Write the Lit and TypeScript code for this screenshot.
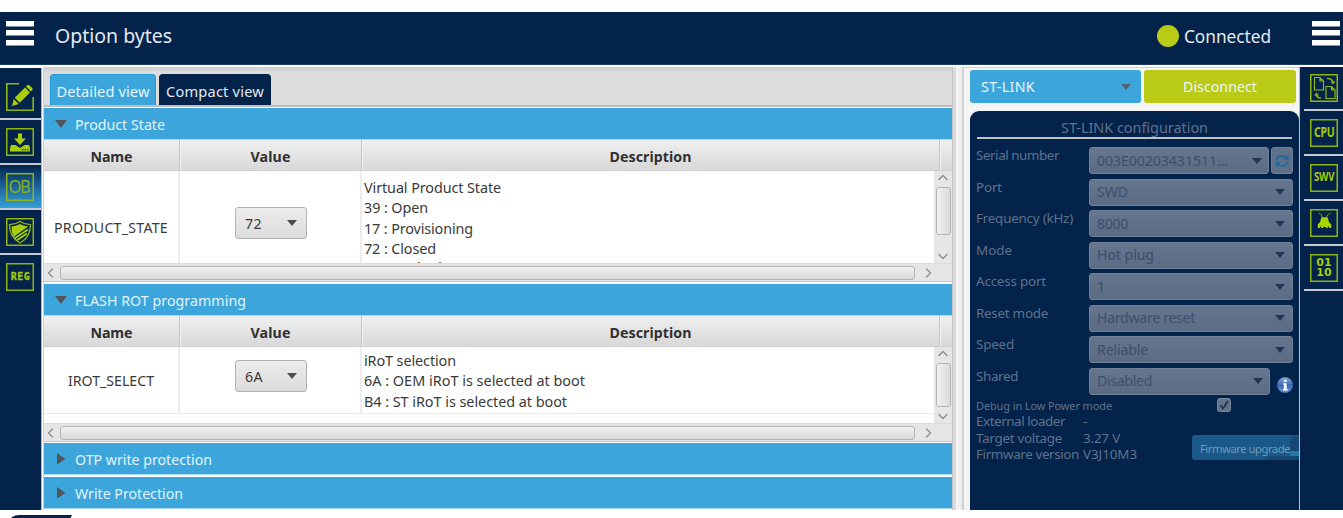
import { LitElement, html, css, svg, nothing } from "lit";
import { customElement, property } from "lit/decorators.js";

const FAMILY = '"Noto Sans", "Open Sans", sans-serif';
const pen = document.createElement("canvas").getContext("2d")!;

/** A single line of text tracked so that it spans a given width. */
@customElement("ui-text")
class UiText extends LitElement {
  @property() text = "";
  @property({ type: Number }) w = 0;
  @property({ type: Number }) size = 14.6;
  @property({ type: Number }) weight = 400;
  static styles = css`
    :host { display: inline-block; white-space: pre; flex: none; }
  `;
  render() {
    pen.font = `${this.weight} ${this.size}px ${FAMILY}`;
    const n = this.text.length;
    const gap = this.w && n > 1 ? (this.w - pen.measureText(this.text).width) / n : 0;
    return html`<span style="font-size:${this.size}px;font-weight:${this.weight};letter-spacing:${gap.toFixed(3)}px">${this.text}</span>`;
  }
}

const t = (text: string, w: number, size = 14.6, weight = 400) =>
  html`<ui-text .text=${text} .w=${w} .size=${size} .weight=${weight}></ui-text>`;

const glyphs: Record<string, unknown> = {
  edit: svg`<path d="M13 .8H.8V27.200H27.200V14" fill="none" stroke="#8fb512" stroke-width="1.600"/>
    <path d="M6 23l1.800-7 5 5zM8.800 14.800L19 4.600l5 5-10.200 10.200zM20 3.600l1.300-1.300q1.200-1 2.300.1l2.600 2.600q1 1.100 0 2.200L24.900 8.500z" fill="#a9cf0a"/>`,
  download: svg`<path d="M12 5.500h4v5h4l-6 6.500-6-6.500h4z" fill="#a9cf0a"/>
    <path d="M5 17h4.500l4.500 3 4.500-3H23l1 3v3.500H4V20z" fill="#a9cf0a"/><path d="M16 21.700h1.300M18.600 21.700h1.300M21.200 21.700h1.300" stroke="#03234b" stroke-width="1.200"/>`,
  shield: svg`<path d="M14 3.500q5 3.200 10.500 3.200 0 12.300-10.500 18.300Q3.500 19 3.500 6.700 9 6.700 14 3.500z" fill="none" stroke="#8fb512" stroke-width="1.300"/>
    <path d="M14 6q4 2.400 8.200 2.600L7.500 19Q5.600 15 5.500 8.600 10 8.400 14 6z" fill="#a9cf0a"/>
    <path d="M8.500 20.500L22 11.500M11 22.300L21 15.500" stroke="#a9cf0a" stroke-width="1.700"/>`,
  files: svg`<path d="M4.500 3.500H10L13.500 7V16H4.500zM10 3.500V7H13.500M16 12.500h5.500L25 16V24.500H16zM21.500 12.500V16H25" fill="none" stroke="#8fb512" stroke-width="1.200"/>
    <path d="M17 4.500q5-.5 6 4M6 20q1 4.500 5 4" fill="none" stroke="#8fb512" stroke-width="1.500"/>
    <path d="M20.500 7.500h5L23 10.500zM4 21.500l2.500-3 2.500 3z" fill="#8fb512"/>`,
  bug: svg`<path d="M8.500 4Q12 5 12.700 9M20.500 4Q17 5 16.300 9" fill="none" stroke="#6f9c18" stroke-width="1"/>
    <path d="M11.500 8.300h6l1.700 5.200 2 1.700V19h-2.200v-1.600h-1.200V19h-1.800v-1h-3v1h-1.800v-1.600H10V19H7.800v-3.800l2-1.700z" fill="#a9d400"/>`,
};
const words: Record<string, unknown> = {
  OB: html`<span class="ob">OB</span>`,
  REG: html`<span class="reg">REG</span>`,
  CPU: html`<span class="cpu">CPU</span>`,
  SWV: html`<span class="swv">SWV</span>`,
  bits: html`<span class="bits">01<br />10</span>`,
};

/** Square tool icon with a lime outline. */
@customElement("tool-icon")
class ToolIcon extends LitElement {
  @property() name = "";
  static styles = css`
    :host { display: block; width: 28px; height: 28px; color: #a4cc08; }
    .box { display: flex; align-items: center; justify-content: center; width: 28px; height: 28px; box-sizing: border-box; border: 1px solid #8fb512; box-shadow: inset 0 0 0 .5px #8fb512; }
    .bare { border-color: transparent; box-shadow: none; }
    svg { width: 28px; height: 28px; margin: -1px; display: block; flex: none; }
    span { line-height: 1; white-space: nowrap; text-align: center; }
    .ob { font: 17.500px/1 "Noto Sans", sans-serif; letter-spacing: -1.500px; color: #86b01e; margin-left: -1px; transform: scaleX(.95); }
    .reg { font: bold 10px/1 "DejaVu Sans Mono", monospace; letter-spacing: .5px; -webkit-text-stroke: .3px #a4cc08; margin-left: 1px; }
    .cpu { font: bold 13.500px/1 "Noto Sans", sans-serif; letter-spacing: -.3px; transform: scaleX(.78); }
    .swv { font: bold 11.500px/1 "Noto Sans", sans-serif; letter-spacing: -.2px; transform: scaleX(.84); margin-top: -3px; }
    .bits { font: bold 11px/10.500px "DejaVu Sans", sans-serif; }
  `;
  render() {
    const g = glyphs[this.name];
    return html`<div class="box ${this.name === "edit" ? "bare" : ""}">
      ${g ? html`<svg viewBox="0 0 28 28">${g}</svg>` : words[this.name]}
    </div>`;
  }
}

@customElement("scroll-bar")
class ScrollBar extends LitElement {
  @property({ type: Boolean }) vertical = false;
  @property({ type: Boolean }) short = false;
  static styles = css`
    :host { display: block; }
    .h, .v { display: flex; background: #e6e6e6; box-sizing: border-box; height: 100%; align-items: center; }
    .h { padding: 0 0 0 3px; border-top: 1px solid #dcdcdc; border-bottom: 1px solid #c8c8c8; }
    .v { flex-direction: column; padding: 3px 0; }
    .thumb { border: 1px solid #b4b4b4; border-radius: 3px; box-sizing: border-box; }
    .h .thumb { width: 855px; height: 14px; margin: 0 10px 0 6px; background: linear-gradient(#f2f2f2, #dadada); }
    .v .thumb { width: 15px; flex: 1; margin: 6px 0 18px; background: linear-gradient(90deg, #f2f2f2, #dadada); }
    .v.short .thumb { margin-bottom: 6px; }
    svg { width: 10px; height: 10px; flex: none; fill: none; stroke: #8c8c8c; stroke-width: 1.300; }
    .h svg { width: 7px; }
    .v svg { height: 7px; }
  `;
  render() {
    return this.vertical
      ? html`<div class="v ${this.short ? "short" : ""}"><svg viewBox="0 0 10 7"><path d="M.5 6L5 1.500 9.500 6" /></svg><div class="thumb"></div><svg viewBox="0 0 10 7"><path d="M.5 1L5 5.500 9.500 1" /></svg></div>`
      : html`<div class="h"><svg viewBox="0 0 7 10"><path d="M6 .5L1.500 5 6 9.500" /></svg><div class="thumb"></div><svg viewBox="0 0 7 10"><path d="M1 .5L5.500 5 1 9.500" /></svg></div>`;
  }
}

@customElement("option-table")
class OptionTable extends LitElement {
  @property() name = "";
  @property({ type: Number }) nameWidth = 0;
  @property() value = "";
  @property({ type: Number }) valueWidth = 0;
  @property({ attribute: false }) lines: [string, number][] = [];
  @property({ type: Boolean }) compact = false;
  static styles = css`
    :host { display: block; }
    .head, .row { display: grid; grid-template-columns: 136px 182px 1fr; }
    .head { grid-template-columns: 136px 182px 578px 1fr; height: 31px; background: linear-gradient(#f0f0f0, #d8d8d8); box-sizing: border-box; border-bottom: 1px solid #d0d0d0; color: #303030; }
    .head div { border-right: 1px solid #c6c6c6; display: grid; place-items: center; box-shadow: 1px 0 #f2f2f2; padding-top: 2px; }
    .head div:last-child { border: 0; box-shadow: none; }
    .body { display: grid; grid-template-columns: 1fr 18px; grid-template-rows: 92px; height: 92px; background: #fff; overflow: hidden; color: #3a3a3a; }
    .row { height: 112px; }
    .cell { border-right: 2px solid #ededed; display: flex; align-items: center; justify-content: center; }
    .desc { display: block; border: 0; padding: 6px 0 0 2px; line-height: 20.300px; }
    .desc div { height: 20.300px; }
    .desc div:nth-child(5) { margin-top: -1.500px; }
    .combo { width: 72px; height: 32px; box-sizing: border-box; border: 1px solid #b2b2b2; border-radius: 3px; background: linear-gradient(#ececec, #dcdcdc); display: flex; align-items: center; justify-content: space-between; padding: 0 9px 0 9px; margin: 0 0 9px 2px; }
    .arrow { width: 0; border: 5px solid transparent; border-top: 6px solid #4d4d4d; border-bottom: 0; }
    .compact .row { height: 66px; border-bottom: 1px solid #ececec; }
    .compact .body { height: 76px; grid-template-rows: 76px; }
    .compact .desc { padding-top: 3px; }
    scroll-bar { height: 19px; }
    .body scroll-bar { height: auto; }
  `;
  render() {
    return html`<div class=${this.compact ? "compact" : "full"}>
      <div class="head">
        <div>${t("Name", 42, 14.2, 700)}</div><div>${t("Value", 40, 14.2, 700)}</div><div>${t("Description", 82, 14.2, 700)}</div><div></div>
      </div>
      <div class="body">
        <div class="row">
          <div class="cell">${t(this.name, this.nameWidth, 14.2)}</div>
          <div class="cell"><div class="combo">${t(this.value, this.valueWidth, 14.2)}<i class="arrow"></i></div></div>
          <div class="cell desc">${this.lines.map(([s, w]) => html`<div>${t(s, w, 14.4)}</div>`)}</div>
        </div>
        <scroll-bar vertical ?short=${this.compact}></scroll-bar>
      </div>
      <scroll-bar></scroll-bar>
    </div>`;
  }
}

@customElement("link-panel")
class LinkPanel extends LitElement {
  static styles = css`
    :host { display: block; }
    .buttons { display: grid; grid-template-columns: 171px 152px; gap: 3px; height: 33px; color: #eaf6fd; }
    .buttons ui-text { margin-top: -2px; }
    .probe { background: #3ca6dc; border-radius: 3px; display: flex; align-items: center; justify-content: space-between; padding: 0 10px 0 11px; }
    .off { background: #b9cb17; border-radius: 3px; display: grid; place-items: center; }
    .arrow { width: 0; border: 5px solid transparent; border-top: 6px solid #23364f; border-bottom: 0; }
    .probe .arrow { border-top-color: #4f6470; }
    .panel { background: #03234b; border-radius: 9px 9px 0 0; margin-top: 8px; height: 399px; box-sizing: border-box; color: #5f728b; padding: 4px 6px 0; width: 329px; }
    .title { height: 22px; display: flex; align-items: center; justify-content: center; padding-top: 1px; box-sizing: border-box; }
    .rule { height: 2px; background: #bcc3cd; margin: 0 1px 8px 1px; }
    .row { display: grid; grid-template-columns: 113px 204px; height: 31.500px; }
    .name { line-height: 17px; margin-top: -1px; }
    .fields { display: flex; gap: 2px; align-items: flex-start; }
    .combo { flex: 1; height: 27px; box-sizing: border-box; border: 1px solid #708096; border-radius: 3px; background: linear-gradient(#65768e, #5a6b83); color: #3d4f69; display: flex; align-items: center; justify-content: space-between; padding: 0 7px 0 7px; }
    .combo ui-text { margin-top: -2px; }
    .combo:not(:last-child) { padding-right: 6px; }
    .refresh { width: 22px; height: 27px; border: 1px solid #708096; border-radius: 3px; box-sizing: border-box; background: #5f7189; display: grid; place-items: center; }
    .refresh svg { width: 16px; height: 16px; }
    .info { width: 16px; height: 16px; margin: 9px 0 0 5px; }
    .debug { display: flex; justify-content: space-between; height: 15px; align-items: center; padding-right: 62px; margin-top: -2px; }
    .debug ui-text { margin-top: -1px; }
    .check { width: 14px; height: 14px; }
    .foot { display: grid; grid-template-columns: 1fr 107px; align-items: end; margin-right: -6px; }
    .facts { display: grid; grid-template-columns: 107px 1fr; grid-auto-rows: 16.700px; line-height: 16.700px; }
    .upgrade { height: 25px; border-radius: 3px 0 0 3px; background: #195887; color: #6f9abc; display: flex; align-items: center; padding-left: 8px; position: relative; overflow: hidden; margin-bottom: 2px; }
    .shade { position: absolute; right: 0; top: 0; width: 34px; height: 25px; }
    .upgrade ui-text { position: relative; margin-top: -2px; }
  `;
  render() {
    const rows: [string, number, string, number][] = [
      ["Serial number", 83, "003E00203431511...", 131],
      ["Port", 26, "SWD", 31],
      ["Frequency (kHz)", 97, "8000", 31],
      ["Mode", 36, "Hot plug", 57],
      ["Access port", 70, "1", 7],
      ["Reset mode", 72, "Hardware reset", 98],
      ["Speed", 38, "Reliable", 51],
      ["Shared", 42, "Disabled", 55],
    ];
    return html`
      <div class="buttons">
        <div class="probe">${t("ST-LINK", 54, 14.2)}<i class="arrow"></i></div>
        <div class="off">${t("Disconnect", 74, 14.2)}</div>
      </div>
      <div class="panel">
        <div class="title">${t("ST-LINK configuration", 147, 14.4)}</div>
        <div class="rule"></div>
        ${rows.map(([n, w, v, vw], i) => html`<div class="row">
          <div class="name">${t(n, w, 13.4)}</div>
          <div class="fields">
            <div class="combo">${t(v, vw, 14.2)}<i class="arrow"></i></div>${i === 0 ? html`<div class="refresh"><svg viewBox="0 0 16 16">
              <path d="M2.500 7.500Q3 3 8 3q3 0 4.500 2.200M13.500 8.500Q13 13 8 13q-3 0-4.500-2.200" fill="none" stroke="#25699c" stroke-width="2.200" /><path d="M14.500 1.500V7H9.200zM1.500 14.500V9h5.300z" fill="#25699c" /></svg></div>` : nothing}
            ${i === 7 ? html`<svg class="info" viewBox="0 0 16 16"><defs><linearGradient id="g" x2="0" y2="1"><stop stop-color="#90acd8" /><stop offset=".5" stop-color="#3a68b2" /><stop offset="1" stop-color="#6d9bdd" /></linearGradient></defs>
              <circle cx="8" cy="8" r="7.700" fill="url(#g)" stroke="#456ba8" stroke-width=".6" /><path d="M6.800 2.800h2.800v2.200H6.800zM6 6.200h3.600V12h1v1.500H6V12h1V7.700H6z" fill="#fff" /></svg>` : nothing}
          </div>
        </div>`)}
        <div class="debug">${t("Debug in Low Power mode", 136, 11)}
          <svg class="check" viewBox="0 0 14 14"><rect x=".5" y=".5" width="13" height="13" rx="2" fill="#61728b" stroke="#75859b" /><path d="M3.500 7l2.500 3.500 5-7.500" fill="none" stroke="#1d3352" stroke-width="1.700" /></svg>
        </div>
        <div class="foot">
          <div class="facts">
            ${t("External loader", 89, 13.4)}${t("-", 5, 13.4)}
            ${t("Target voltage", 86, 13.4)}${t("3.27 V", 37, 13.4)}
            ${t("Firmware version", 103, 13.4)}${t("V3J10M3", 54, 13.4)}
          </div>
          <div class="upgrade"><svg class="shade" viewBox="0 0 34 25"><path d="M25 16V8q1-7 9-7v15zM0 25q2-4 7-4h27v4z" fill="#164873" /><path d="M25 16h9v5h-9z" fill="#2477a8" /></svg>${t("Firmware upgrade", 90, 11.3)}</div>
        </div>
      </div>`;
  }
}

@customElement("app-root")
class AppRoot extends LitElement {
  static styles = css`
    :host { display: block; width: 1343px; height: 518px; overflow: hidden; background: #fff; font-family: "Noto Sans", "Open Sans", sans-serif; padding-top: 12px; box-sizing: border-box; }
    .top { height: 53px; box-sizing: border-box; background: #03234b; border-bottom: 1px solid #1b3b63; display: flex; align-items: flex-start; padding: 9px 3px 0 6px; color: #e4e9ef; }
    .burger { width: 28px; height: 25px; flex: none; fill: #fff; }
    .title { margin: 1px 0 0 21px; line-height: 27px; flex: 1; }
    .state { display: flex; align-items: center; gap: 5px; margin-right: 41px; line-height: 27px; }
    .state ui-text { margin-top: 2px; height: 27px; }
    .dot { width: 22px; height: 22px; border-radius: 50%; background: #b9cb17; }
    .main { display: flex; height: 443px; margin-top: 2px; }
    .left { width: 42px; box-sizing: border-box; background: #03234b; border-right: 1px solid #a9b3c0; margin-top: 1px; }
    .tool { height: 45px; box-sizing: border-box; padding: 8px 0 0 6px; border-bottom: 2px solid #c4cad2; }
    .left .tool:first-child { height: 52px; padding-top: 15px; }
    .left .tool:last-child { border: 0; }
    .active { background: linear-gradient(#03234b, #1d6499 50%, #36a0d8); }
    .work { width: 910px; margin-left: 1px; box-sizing: border-box; border-left: 1px solid #cfcfcf; border-right: 1px solid #c6c6c6; background: #fff; }
    .tabs { height: 40px; background: linear-gradient(#cfcfcf, #dcdcdc 5px); box-sizing: border-box; padding: 7px 0 0 6px; display: flex; gap: 3px; border-bottom: 2px solid #bdbdbd; }
    .tab { height: 31px; width: 106px; box-sizing: border-box; border-radius: 4px 4px 0 0; background: #3ca6dc; border: 1px solid #229bd6; border-bottom: 0; color: #e6f5fd; display: grid; place-items: center; padding-top: 1px; }
    .tab.dark { width: 112px; background: #03234b; border-color: #03234b; color: #e4e9ef; }
    .bar { height: 32px; background: #3ca6dc; box-sizing: border-box; border-bottom: 1px solid #a9d9f0; display: flex; align-items: center; color: #e0f3fc; margin-top: 1px; }
    .bar.second { margin-top: 2px; }
    .bar.third { margin-top: 1px; }
    .bar.last { margin-top: 2px; }
    .bar svg { width: 12px; height: 12px; margin: 0 8px 0 11px; fill: #505659; }
    .split { width: 9px; background: linear-gradient(90deg, #dadada 3px, #f7f7f7 3px, #e9e9e9); border-right: 2px solid #d2d2d2; }
    .side { width: 335px; box-sizing: border-box; background: #f4f4f4; border-top: 1px solid #d0d0d0; padding: 2px 0 0 6px; }
    .right { flex: 1; background: #03234b; border-left: 1px solid #b4bdc9; padding-left: 4px; }
    .right .tool { padding: 8px 0 0 6px; }
    .right .tool:first-child { height: 44px; padding-top: 7px; }
    .below { width: 62px; height: 4px; margin: 5px 0 0 10px; display: block; }
  `;
  render() {
    const burger = html`<svg class="burger" viewBox="0 0 28 25"><path d="M0 0h28v5.500H0zM0 9h28v5.500H0zM0 19h28v5.500H0z" /></svg>`;
    const down = html`<svg viewBox="0 0 12 12"><path d="M0 2h12L6 10z" /></svg>`;
    const right = html`<svg viewBox="0 0 12 12"><path d="M2 0v11.500L10.500 6z" /></svg>`;
    const tools = (names: string[], active = "") =>
      names.map((n) => html`<div class="tool ${n === active ? "active" : ""}"><tool-icon name=${n}></tool-icon></div>`);
    return html`
      <div class="top">
        ${burger}<div class="title">${t("Option bytes", 117, 19.5)}</div>
        <div class="state"><i class="dot"></i>${t("Connected", 87, 17.3)}</div>
        ${burger}
      </div>
      <div class="main">
        <div class="left">${tools(["edit", "download", "OB", "shield", "REG"], "OB")}</div>
        <div class="work">
          <div class="tabs"><div class="tab">${t("Detailed view", 93)}</div><div class="tab dark">${t("Compact view", 98)}</div></div>
          <div class="bar">${down}${t("Product State", 90, 14.2)}</div>
          <option-table name="PRODUCT_STATE" .nameWidth=${114} value="72" .valueWidth=${17}
            .lines=${[["Virtual Product State", 137], ["39 : Open", 64], ["17 : Provisioning", 109], ["72 : Closed", 72], ["5C : Locked", 78]]}></option-table>
          <div class="bar second">${down}${t("FLASH ROT programming", 171, 14.2)}</div>
          <option-table compact name="IROT_SELECT" .nameWidth=${86} value="6A" .valueWidth=${18}
            .lines=${[["iRoT selection", 92], ["6A : OEM iRoT is selected at boot", 221], ["B4 : ST iRoT is selected at boot", 203]]}></option-table>
          <div class="bar third">${right}${t("OTP write protection", 137, 14.2)}</div>
          <div class="bar last">${right}${t("Write Protection", 108, 14.2)}</div>
        </div>
        <div class="split"></div>
        <div class="side"><link-panel></link-panel></div>
        <div class="right">${tools(["files", "CPU", "SWV", "bug", "bits"])}</div>
      </div>
      <svg class="below" viewBox="0 0 62 4"><path d="M0 4Q3 0 10 0H62L60 4z" fill="#03234b" /></svg>`;
  }
}
